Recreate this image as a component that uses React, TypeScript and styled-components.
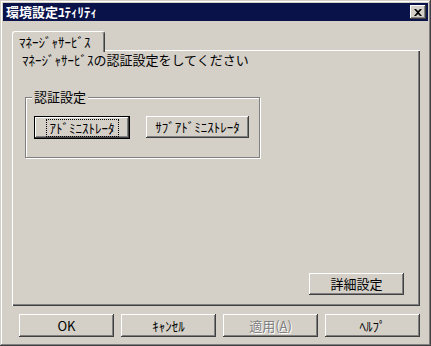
import React from "react";
import styled, { createGlobalStyle, css } from "styled-components";

const FACE = "#d4d0c8";
const FONT = `"Noto Sans CJK JP", "Liberation Sans", sans-serif`;

const GlobalStyle = createGlobalStyle`
  body {
    margin: 0;
    background: ${FACE};
    font-family: ${FONT};
  }
  * {
    box-sizing: border-box;
  }
`;

const Window = styled.div`
  width: 431px;
  height: 346px;
  padding: 3px;
  display: flex;
  flex-direction: column;
  background: ${FACE};
  box-shadow: inset -1px -1px #404040, inset 1px 1px ${FACE},
    inset -2px -2px #808080, inset 2px 2px #ffffff;
`;

const TitleBar = styled.div`
  height: 18px;
  display: flex;
  align-items: center;
  justify-content: space-between;
  padding: 0 2px 0 3px;
  background: #0a124a;
`;

const TitleText = styled.span`
  color: #ffffff;
  font-size: 13px;
  font-weight: 700;
  line-height: 18px;
  white-space: nowrap;
`;

const CloseButton = styled.div`
  width: 16px;
  height: 14px;
  display: flex;
  align-items: center;
  justify-content: center;
  background: ${FACE};
  box-shadow: inset -1px -1px #404040, inset 1px 1px #ffffff,
    inset -2px -2px #808080;
`;

const Body = styled.div`
  flex: 1;
  display: flex;
  flex-direction: column;
  padding: 10px 8px 6px 9px;
`;

const TabStrip = styled.div`
  height: 19px;
  display: flex;
  align-items: flex-start;
`;

const Tab = styled.div`
  position: relative;
  z-index: 1;
  width: 93px;
  height: 21px;
  padding: 2px 0 0 6px;
  font-size: 13px;
  line-height: 16px;
  color: #000;
  background: ${FACE};
  border-top: 1px solid #ffffff;
  border-left: 1px solid #ffffff;
  border-right: 1px solid #404040;
  border-radius: 3px 3px 0 0;
  box-shadow: inset -1px 0 #808080;
  white-space: nowrap;
`;

const Panel = styled.div`
  height: 256px;
  display: flex;
  flex-direction: column;
  padding: 3px 16px 11px 10px;
  box-shadow: inset 1px 1px #ffffff, inset -1px -1px #404040,
    inset -2px -2px #808080;
`;

const Prompt = styled.div`
  font-size: 13px;
  line-height: 14px;
  color: #000;
  white-space: nowrap;
`;

const GroupBox = styled.div`
  position: relative;
  width: 235px;
  height: 61px;
  margin: 30px 0 0 3px;
  padding: 18px 0 0 8px;
  display: flex;
  align-items: flex-start;
  gap: 16px;
  border: 1px solid #808080;
  box-shadow: inset 1px 1px #ffffff, 1px 1px #ffffff;
`;

const GroupLabel = styled.span`
  position: absolute;
  top: -8px;
  left: 6px;
  padding: 0 2px;
  font-size: 13px;
  line-height: 14px;
  background: ${FACE};
  color: #000;
`;

const Spacer = styled.div`
  flex: 1;
`;

const RightRow = styled.div`
  display: flex;
  justify-content: flex-end;
`;

const Footer = styled.div`
  margin-top: 8px;
  display: flex;
  justify-content: flex-end;
  gap: 7px;
`;

const Button = styled.div<{ $w: number; $h?: number; $default?: boolean; $disabled?: boolean }>`
  position: relative;
  width: ${(p) => p.$w}px;
  height: ${(p) => p.$h ?? 23}px;
  display: flex;
  align-items: center;
  justify-content: center;
  font-size: 13px;
  line-height: 14px;
  color: #000;
  background: ${FACE};
  white-space: nowrap;
  box-shadow: inset -1px -1px #404040, inset 1px 1px #ffffff,
    inset -2px -2px #808080;
  ${(p) =>
    p.$default &&
    css`
      border: 1px solid #000;
    `}
  ${(p) =>
    p.$disabled &&
    css`
      color: #808080;
      text-shadow: 1px 1px #ffffff;
    `}
`;

const FocusRing = styled.span`
  padding: 1px 3px;
  border: 1px dotted #000;
`;

const Mnemonic = styled.span`
  text-decoration: underline;
`;

const CloseIcon = () => (
  <svg width="8" height="7" viewBox="0 0 8 7">
    <path d="M0 0h2l2 2 2-2h2L5 3.5 8 7H6L4 5 2 7H0l3-3.5z" fill="#000" />
  </svg>
);

export default function App() {
  return (
    <>
      <GlobalStyle />
      <Window>
        <TitleBar>
          <TitleText>環境設定ﾕﾃｨﾘﾃｨ</TitleText>
          <CloseButton>
            <CloseIcon />
          </CloseButton>
        </TitleBar>
        <Body>
          <TabStrip>
            <Tab>ﾏﾈｰｼﾞｬｻｰﾋﾞｽ</Tab>
          </TabStrip>
          <Panel>
            <Prompt>ﾏﾈｰｼﾞｬｻｰﾋﾞｽの認証設定をしてください</Prompt>
            <GroupBox>
              <GroupLabel>認証設定</GroupLabel>
              <Button $w={96} $default>
                <FocusRing>ｱﾄﾞﾐﾆｽﾄﾚｰﾀ</FocusRing>
              </Button>
              <Button $w={103} $h={22}>
                ｻﾌﾞｱﾄﾞﾐﾆｽﾄﾚｰﾀ
              </Button>
            </GroupBox>
            <Spacer />
            <RightRow>
              <Button $w={95} $h={22}>
                詳細設定
              </Button>
            </RightRow>
          </Panel>
          <Footer>
            <Button $w={95}>OK</Button>
            <Button $w={95}>ｷｬﾝｾﾙ</Button>
            <Button $w={95} $disabled>
              適用(<Mnemonic>A</Mnemonic>)
            </Button>
            <Button $w={95}>ﾍﾙﾌﾟ</Button>
          </Footer>
        </Body>
      </Window>
    </>
  );
}
